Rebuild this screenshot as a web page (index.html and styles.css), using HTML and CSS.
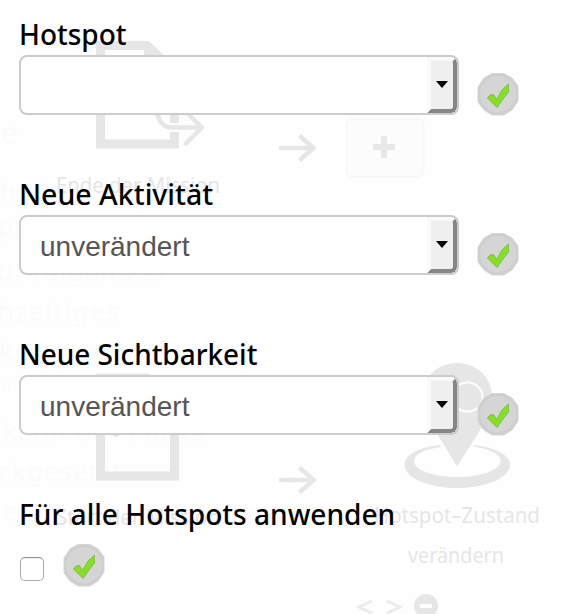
FILE: index.html
```html
<!DOCTYPE html>
<html lang="de">
<head>
<meta charset="utf-8">
<title>Hotspot</title>
<link rel="stylesheet" href="styles.css">
</head>
<body>
<svg class="canvas" width="562" height="614" viewBox="0 0 562 614" aria-hidden="true">
  <g class="faint">
    <text x="1" y="144" font-size="31">e</text>
    <text x="0" y="201" textLength="50">h wi</text>
    <text x="-2" y="241">Pl</text>
    <text x="-3" y="281" textLength="166">uf folgendes</text>
    <text x="-2" y="321" textLength="121">hzeitiges</text>
    <text x="-1" y="361">k</text>
    <text x="1" y="401">"</text>
    <text x="3" y="441" textLength="206">kann der Player</text>
    <text x="-2" y="481" textLength="124">ckgesetzt</text>
    <text x="2" y="521">e</text>
  </g>
  <g class="shape">
    <path fill-rule="evenodd" d="M96 41H149L179 70V148.500H96ZM105 50V139.500H170V80H144V50Z"/>
    <path d="M96 373.500H149L179 402V480.500H96ZM105 382V471.500H170V411H144V382Z" fill-rule="evenodd"/>
  </g>
  <path class="knock" d="M158 114C158 123 164 127.500 172 127.500H190"/>
  <g class="stroke">
    <path d="M157 112C159 122 164 127.500 172 127.500H201M185 111L202 127.500L186 143.500"/>
    <path d="M281 148H314M301 137L313.500 148L301 159"/>
    <path d="M281 480H314M301 469L313.500 480L301 491"/>
    <path d="M108 427L116 435L133 416"/>
  </g>
  <rect class="add-box" x="346.500" y="119" width="77" height="58" rx="6"/>
  <path class="add-sign" d="M373 147H395M384 136V158"/>
  <g class="shape">
    <path d="M440 445C419 447 404.500 455 404.500 464.500C404.500 478 428 488 457 488S510 478 510 464.500C510 455 495 447 473 445L475 447C490 449 500.500 454 500.500 461C500.500 470 481 477 457 477S414 470 414 461C414 454 425 449 441 447Z"/>
    <path d="M457 466.500L436 432C428 419 422 408 422 396C422 377 438 363 457 363S492 377 492 396C492 408 486 421 479 432Z"/>
  </g>
  <ellipse class="pin-eye" cx="467.500" cy="397" rx="15" ry="14.500"/>
  <g class="caption">
    <text x="56" y="192.500" textLength="164" lengthAdjust="spacingAndGlyphs">Ende der Mission</text>
    <text x="56" y="524.500" textLength="164" lengthAdjust="spacingAndGlyphs">Start der Mission</text>
    <text x="374" y="523" textLength="166" lengthAdjust="spacingAndGlyphs">Hotspot–Zustand</text>
    <text x="408" y="563" textLength="96" lengthAdjust="spacingAndGlyphs">verändern</text>
  </g>
  <path class="angles" d="M372 601L359 607L372 613M387 601L400 607L387 613"/>
  <circle class="remove" cx="426" cy="606" r="12"/>
  <rect x="420" y="604" width="12" height="4" fill="#fff"/>
</svg>

<svg class="symbols" aria-hidden="true">
  <symbol id="ok" viewBox="0 0 44 44">
    <path d="M16 1.500H28L36 6L42 14V29L36 38L28 43H16L8 38L2 30V15L8 6Z" fill="#cecece" stroke="#d6d6d6" stroke-width="1" stroke-linejoin="round"/>
    <circle cx="22" cy="22" r="18" fill="#d5d5d5"/>
    <path d="M11.500 26L14 23L17.500 22.500L20.500 27.500L26 18L32.500 12V20L27 27L21 35.500Z" fill="#86df22" stroke="#7fc050" stroke-width="1" stroke-linejoin="round"/>
  </symbol>
</svg>

<form class="form">
  <section class="field">
    <label class="label"><span class="fit hotspot">Hotspot</span></label>
    <div class="row">
      <div class="select"><span class="value"></span><span class="drop"><i class="arrow"></i></span></div>
      <svg class="ok"><use href="#ok"/></svg>
    </div>
  </section>
  <section class="field">
    <label class="label"><span class="fit activity">Neue Aktivität</span></label>
    <div class="row">
      <div class="select"><span class="value">unverändert</span><span class="drop"><i class="arrow"></i></span></div>
      <svg class="ok"><use href="#ok"/></svg>
    </div>
  </section>
  <section class="field">
    <label class="label"><span class="fit visibility">Neue Sichtbarkeit</span></label>
    <div class="row">
      <div class="select"><span class="value">unverändert</span><span class="drop"><i class="arrow"></i></span></div>
      <svg class="ok"><use href="#ok"/></svg>
    </div>
  </section>
  <section class="field last">
    <label class="label"><span class="fit all">Für alle Hotspots anwenden</span></label>
    <div class="row check-row">
      <span class="checkbox"></span>
      <svg class="ok"><use href="#ok"/></svg>
    </div>
  </section>
</form>
</body>
</html>
```
FILE: styles.css
```css
body {
  margin: 0;
  width: 562px;
  height: 614px;
  overflow: hidden;
  background: #fefefe;
  font-family: "Noto Sans", sans-serif;
}
.canvas {
  position: absolute;
  top: 0;
  left: 0;
}
.symbols {
  position: absolute;
  width: 0;
  height: 0;
}
.faint { fill: #fbfbfb; font-size: 26px; }
.shape { fill: #e6e6e6; }
.knock { fill: none; stroke: #fefefe; stroke-width: 9; }
.stroke {
  fill: none;
  stroke: #e6e6e6;
  stroke-width: 4.500;
  stroke-linecap: round;
  stroke-linejoin: round;
}
.add-box { fill: #fcfcfc; stroke: #f8f8f8; stroke-width: 2; }
.add-sign { stroke: #e9e9e9; stroke-width: 6; }
.pin-eye { fill: #e6e6e6; stroke: #fefefe; stroke-width: 2; }
.caption { fill: #e6e6e6; font-size: 21px; }
.angles { fill: none; stroke: #e9eee9; stroke-width: 3; }
.remove { fill: #e6e6e6; }

.form {
  position: relative;
  padding: 16px 0 0 19px;
}
.field { height: 160px; }
.field.last { height: 110px; }
.label {
  display: block;
  height: 39px;
  line-height: 37px;
  font-size: 28.500px;
  font-weight: 500;
  color: #000;
  white-space: nowrap;
}
.fit { display: inline-block; transform-origin: 0 50%; }
.hotspot { transform: scaleX(.982); }
.visibility { transform: scaleX(.98); }
.all { transform: scaleX(.985); }
.row {
  display: flex;
  align-items: flex-start;
  gap: 17px;
}
.select {
  box-sizing: border-box;
  display: flex;
  width: 440px;
  height: 60px;
  border: 2px solid #ccc;
  border-radius: 8px;
  background: #fff;
  overflow: hidden;
}
.value {
  flex: 1;
  padding-left: 19px;
  font: 28px/59px "Liberation Sans", sans-serif;
  color: #555;
}
.drop {
  box-sizing: border-box;
  display: flex;
  justify-content: center;
  align-items: center;
  width: 30px;
  border: 4px solid;
  border-color: #fafafa #858585 #858585 #fafafa;
  border-radius: 0 6px 6px 0;
  background: #efefef;
}
.arrow {
  margin-top: -1px;
  border: 6.500px solid transparent;
  border-top: 7px solid #000;
  border-bottom: 0;
}
.ok {
  width: 44px;
  height: 44px;
  margin-top: 17px;
}
.check-row { gap: 18px; }
.checkbox {
  box-sizing: border-box;
  width: 24px;
  height: 24px;
  margin: 22px 0 0 1px;
  border: 1.500px solid #aaa;
  border-top-color: #929292;
  border-radius: 5px;
  background: #fff;
  box-shadow: inset 0 1px 1px #eee;
}
.check-row .ok { margin-top: 8px; }
```
